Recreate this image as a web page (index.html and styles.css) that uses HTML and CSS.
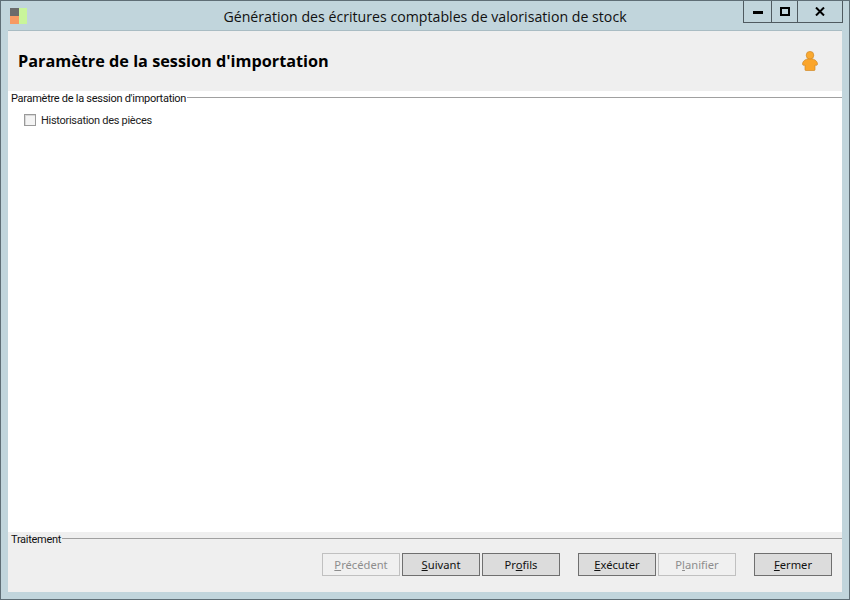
FILE: index.html
```html
<!DOCTYPE html>
<html lang="fr">
<head>
<meta charset="utf-8">
<title>Génération des écritures comptables de valorisation de stock</title>
<link rel="stylesheet" href="styles.css">
</head>
<body>
<div class="window">
  <div class="titlebar">
    <div class="app-icon">
      <svg width="17" height="16" viewBox="0 0 17 16">
        <rect x="0" y="0" width="9" height="8" fill="#6b6b6b"/>
        <rect x="0" y="8" width="9" height="8" fill="#f79a63"/>
        <rect x="9" y="8" width="1" height="8" fill="#8a8a80"/>
        <rect x="9" y="0" width="8" height="16" fill="#c9f59a"/>
      </svg>
    </div>
    <div class="title">Génération des écritures comptables de valorisation de stock</div>
    <div class="controls">
      <div class="ctl ctl-min"><svg width="10" height="4" viewBox="0 0 10 4"><rect width="10" height="3" y="1" fill="#000"/></svg></div>
      <div class="ctl ctl-max"><svg width="10" height="9" viewBox="0 0 10 9"><rect x="1" y="1" width="8" height="7" fill="none" stroke="#000" stroke-width="2"/></svg></div>
      <div class="ctl ctl-close"><svg width="10" height="9" viewBox="0 0 10 9"><path d="M1 0.5L9 8.5M9 0.5L1 8.5" stroke="#000" stroke-width="2" fill="none"/></svg></div>
    </div>
  </div>
  <div class="client">
    <header class="header">
      <h1 class="heading">Paramètre de la session d'importation</h1>
      <svg class="person" width="16" height="20" viewBox="0 0 16 20">
        <path d="M4.6 8.2C5.6 7.7 10.4 7.7 11.4 8.2C13.6 9 15.5 10.8 15.5 13C15.5 14.4 14.2 14.6 13 14L13 18.7C13 19.3 12.6 19.5 12 19.5L4 19.5C3.4 19.5 3 19.3 3 18.7L3 14C1.8 14.6 0.5 14.4 0.5 13C0.5 10.8 2.4 9 4.6 8.2Z" fill="#fba52a" stroke="#d08a2a" stroke-width="0.7"/>
        <circle cx="8" cy="4.2" r="3.8" fill="#faa92f" stroke="#d08a2a" stroke-width="0.7"/>
      </svg>
    </header>
    <main class="main">
      <div class="group-title"><span class="group-label">Paramètre de la session d'importation</span><i class="rule"></i></div>
      <label class="check"><span class="box"></span><span class="check-label">Historisation des pièces</span></label>
    </main>
    <footer class="footer">
      <div class="group-title"><span class="group-label">Traitement</span><i class="rule"></i></div>
      <div class="buttons">
        <button class="btn" disabled><u>P</u>récédent</button>
        <button class="btn"><u>S</u>uivant</button>
        <button class="btn"><span>Pr<u>o</u>fils</span></button>
        <button class="btn sep"><u>E</u>xécuter</button>
        <button class="btn" disabled>P<u>l</u>anifier</button>
        <button class="btn sep"><u>F</u>ermer</button>
      </div>
    </footer>
  </div>
</div>
</body>
</html>
```
FILE: styles.css
```css
* { box-sizing: border-box; }
html, body { margin: 0; padding: 0; }
body { width: 850px; height: 600px; overflow: hidden; font-family: "Roboto", sans-serif; }
.window {
  width: 850px; height: 600px;
  display: flex; flex-direction: column;
  background: #c1d5dc;
  border: 1px solid #5f6e76;
  padding: 0 7px 7px 7px;
}
.titlebar {
  height: 29px; flex: none;
  display: grid; grid-template-columns: 1fr auto 1fr;
  align-items: start;
}
.app-icon { padding: 7px 0 0 2px; height: 29px; }
.app-icon svg { display: block; }
.title {
  font-family: "Open Sans", sans-serif; font-size: 14.17px; line-height: 18px;
  padding-top: 7px; color: #111; white-space: nowrap;
}
.controls {
  justify-self: end; display: flex; height: 22px;
  border: 1px solid #4f5a60; border-top: 0;
  margin-right: -1px;
}
.ctl { height: 21px; display: flex; align-items: center; justify-content: center; }
.ctl-min { width: 28px; border-right: 1px solid #4f5a60; }
.ctl-max { width: 26px; border-right: 1px solid #4f5a60; }
.ctl-close { width: 44px; }
.client {
  flex: 1; min-height: 0;
  display: flex; flex-direction: column;
  background: #fff;
  border-top: 1px solid #a9bcc3;
}
.header {
  height: 60px; flex: none; background: #efefef;
  display: flex; align-items: center; justify-content: space-between;
  padding: 0 24px 0 10px;
}
.heading {
  margin: 0; font-family: "Open Sans", sans-serif;
  font-size: 16.26px; font-weight: 700; color: #000;
}
.person { display: block; }
.main { flex: 1; min-height: 0; background: #fff; }
.group-title {
  display: flex; align-items: center; height: 13px;
  padding-left: 3px; font-size: 11px; line-height: 13px; color: #111;
  white-space: nowrap;
}
.group-label { padding-top: 2px; letter-spacing: -0.28px; }
.rule { flex: 1; height: 1px; background: #a0a0a0; margin-left: 1px; }
.check {
  display: flex; align-items: center; gap: 5px;
  margin: 8px 0 0 16px; font-size: 11px; line-height: 14px; color: #222;
}
.check-label { padding-top: 2px; letter-spacing: -0.29px; }
.box {
  width: 12px; height: 12px; border: 1px solid #9a9a9a; background: #f4f4f4;
  box-shadow: inset 1px 1px 0 #d8d8d8;
}
.footer { height: 60px; flex: none; background: #efefef; }
.buttons {
  display: flex; justify-content: flex-end; gap: 2px;
  padding: 8px 10px 0 0;
}
.btn {
  width: 78px; height: 23px; padding: 0;
  font-family: "Noto Sans", sans-serif; font-size: 11.2px; line-height: 15px;
  background: #dcdcdc; color: #111; border: 1px solid #6f6f6f; border-radius: 0;
}
.btn:disabled { background: #f0f0f0; color: #8d8d8d; border-color: #c0c0c0; }
.sep { margin-left: 16px; }
```
